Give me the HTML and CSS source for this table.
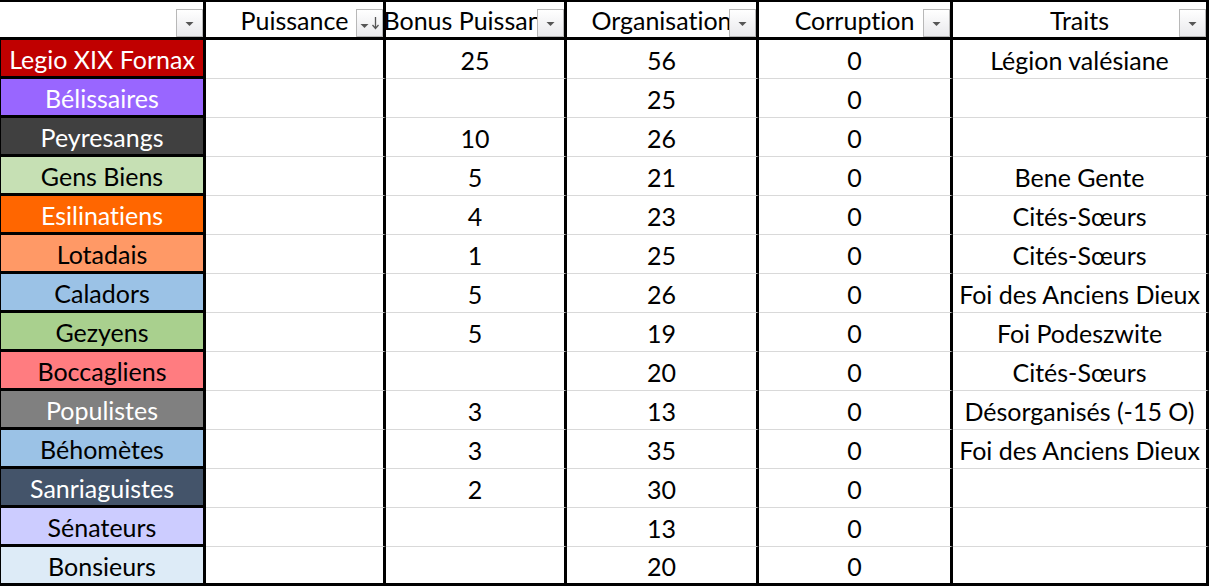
FILE: index.html
```html
<!DOCTYPE html>
<html lang="fr">
<head>
<meta charset="utf-8">
<title>Factions</title>
<link rel="stylesheet" href="styles.css">
</head>
<body>
<div class="sheet">
  <div class="hd c1"><span class="lbl"></span><span class="filter"><svg viewBox="0 0 27 28" width="27" height="28"><path d="M9.5 13h8l-4 4z" fill="#555"/></svg></span></div>
  <div class="hd c2"><span class="lbl">Puissance</span><span class="filter"><svg viewBox="0 0 27 28" width="27" height="28"><path d="M4.5 15h8l-4 4z" fill="#555"/><path d="M19.5 8v11M16.5 16l3 3.5 3-3.5" fill="none" stroke="#555" stroke-width="1.3"/></svg></span></div>
  <div class="hd c3"><span class="lbl">Bonus Puissance</span><span class="filter"><svg viewBox="0 0 27 28" width="27" height="28"><path d="M9.5 13h8l-4 4z" fill="#555"/></svg></span></div>
  <div class="hd c4"><span class="lbl">Organisation</span><span class="filter"><svg viewBox="0 0 27 28" width="27" height="28"><path d="M9.5 13h8l-4 4z" fill="#555"/></svg></span></div>
  <div class="hd c5"><span class="lbl">Corruption</span><span class="filter"><svg viewBox="0 0 27 28" width="27" height="28"><path d="M9.5 13h8l-4 4z" fill="#555"/></svg></span></div>
  <div class="hd c6"><span class="lbl">Traits</span><span class="filter"><svg viewBox="0 0 27 28" width="27" height="28"><path d="M9.5 13h8l-4 4z" fill="#555"/></svg></span></div>

  <div class="name n-legio">Legio XIX Fornax</div><div class="cell"></div><div class="cell">25</div><div class="cell">56</div><div class="cell">0</div><div class="cell last">Légion valésiane</div>
  <div class="name n-beli">Bélissaires</div><div class="cell"></div><div class="cell"></div><div class="cell">25</div><div class="cell">0</div><div class="cell last"></div>
  <div class="name n-peyr">Peyresangs</div><div class="cell"></div><div class="cell">10</div><div class="cell">26</div><div class="cell">0</div><div class="cell last"></div>
  <div class="name n-gens">Gens Biens</div><div class="cell"></div><div class="cell">5</div><div class="cell">21</div><div class="cell">0</div><div class="cell last">Bene Gente</div>
  <div class="name n-esil">Esilinatiens</div><div class="cell"></div><div class="cell">4</div><div class="cell">23</div><div class="cell">0</div><div class="cell last">Cités-Sœurs</div>
  <div class="name n-lota">Lotadais</div><div class="cell"></div><div class="cell">1</div><div class="cell">25</div><div class="cell">0</div><div class="cell last">Cités-Sœurs</div>
  <div class="name n-cala">Caladors</div><div class="cell"></div><div class="cell">5</div><div class="cell">26</div><div class="cell">0</div><div class="cell last">Foi des Anciens Dieux</div>
  <div class="name n-gezy">Gezyens</div><div class="cell"></div><div class="cell">5</div><div class="cell">19</div><div class="cell">0</div><div class="cell last">Foi Podeszwite</div>
  <div class="name n-bocc">Boccagliens</div><div class="cell"></div><div class="cell"></div><div class="cell">20</div><div class="cell">0</div><div class="cell last">Cités-Sœurs</div>
  <div class="name n-popu">Populistes</div><div class="cell"></div><div class="cell">3</div><div class="cell">13</div><div class="cell">0</div><div class="cell last">Désorganisés (-15 O)</div>
  <div class="name n-beho">Béhomètes</div><div class="cell"></div><div class="cell">3</div><div class="cell">35</div><div class="cell">0</div><div class="cell last">Foi des Anciens Dieux</div>
  <div class="name n-sanr">Sanriaguistes</div><div class="cell"></div><div class="cell">2</div><div class="cell">30</div><div class="cell">0</div><div class="cell last"></div>
  <div class="name n-sena">Sénateurs</div><div class="cell"></div><div class="cell"></div><div class="cell">13</div><div class="cell">0</div><div class="cell last"></div>
  <div class="name n-bons bottom">Bonsieurs</div><div class="cell bottom"></div><div class="cell bottom"></div><div class="cell bottom">20</div><div class="cell bottom">0</div><div class="cell last bottom"></div>
</div>
</body>
</html>
```

FILE: styles.css
```css
* { box-sizing: border-box; }
html, body { margin: 0; padding: 0; background: #fff; }
body {
  font-family: Lato, "Open Sans", sans-serif;
  font-size: 25px;
  font-variant-ligatures: none;
  color: #000;
}
.sheet {
  display: grid;
  grid-template-columns: 206px 180px 181px 192px 194px 256px;
  grid-template-rows: 40px repeat(14, 39px);
  width: 1209px;
}
.hd {
  position: relative;
  display: flex;
  align-items: center;
  justify-content: center;
  overflow: hidden;
  white-space: nowrap;
  border-top: 2px solid #000;
  border-bottom: 3px solid #000;
  border-right: 3px solid #000;
  padding-top: 1px;
  background: #fff;
}
.hd .lbl { flex: none; }
.filter {
  position: absolute;
  right: 0;
  bottom: 0;
  width: 27px;
  height: 28px;
  border: 1px solid #b8b8b8;
  background: linear-gradient(#ffffff, #e9e9ec);
  display: block;
}
.filter svg { display: block; margin: -1px; }
.name, .cell {
  display: flex;
  align-items: center;
  justify-content: center;
  white-space: nowrap;
  overflow: hidden;
  padding-top: 2px;
  border-right: 3px solid #000;
}
.name {
  border-bottom: 3px solid #000;
  border-left: 1px solid #000;
}
.cell { border-bottom: 1px solid #d9d9d9; }
.cell.bottom, .name.bottom { border-bottom: 3px solid #000; }

.n-legio { background: #c00000; color: #fff; }
.n-beli { background: #9966ff; color: #fff; }
.n-peyr { background: #404040; color: #fff; }
.n-gens { background: #c6e0b4; }
.n-esil { background: #ff6600; color: #fff; }
.n-lota { background: #ff9966; }
.n-cala { background: #9bc2e6; }
.n-gezy { background: #a9d08e; }
.n-bocc { background: #ff7c80; }
.n-popu { background: #808080; color: #fff; }
.n-beho { background: #9bc2e6; }
.n-sanr { background: #44546a; color: #fff; }
.n-sena { background: #ccccff; }
.n-bons { background: #ddebf7; }
```
